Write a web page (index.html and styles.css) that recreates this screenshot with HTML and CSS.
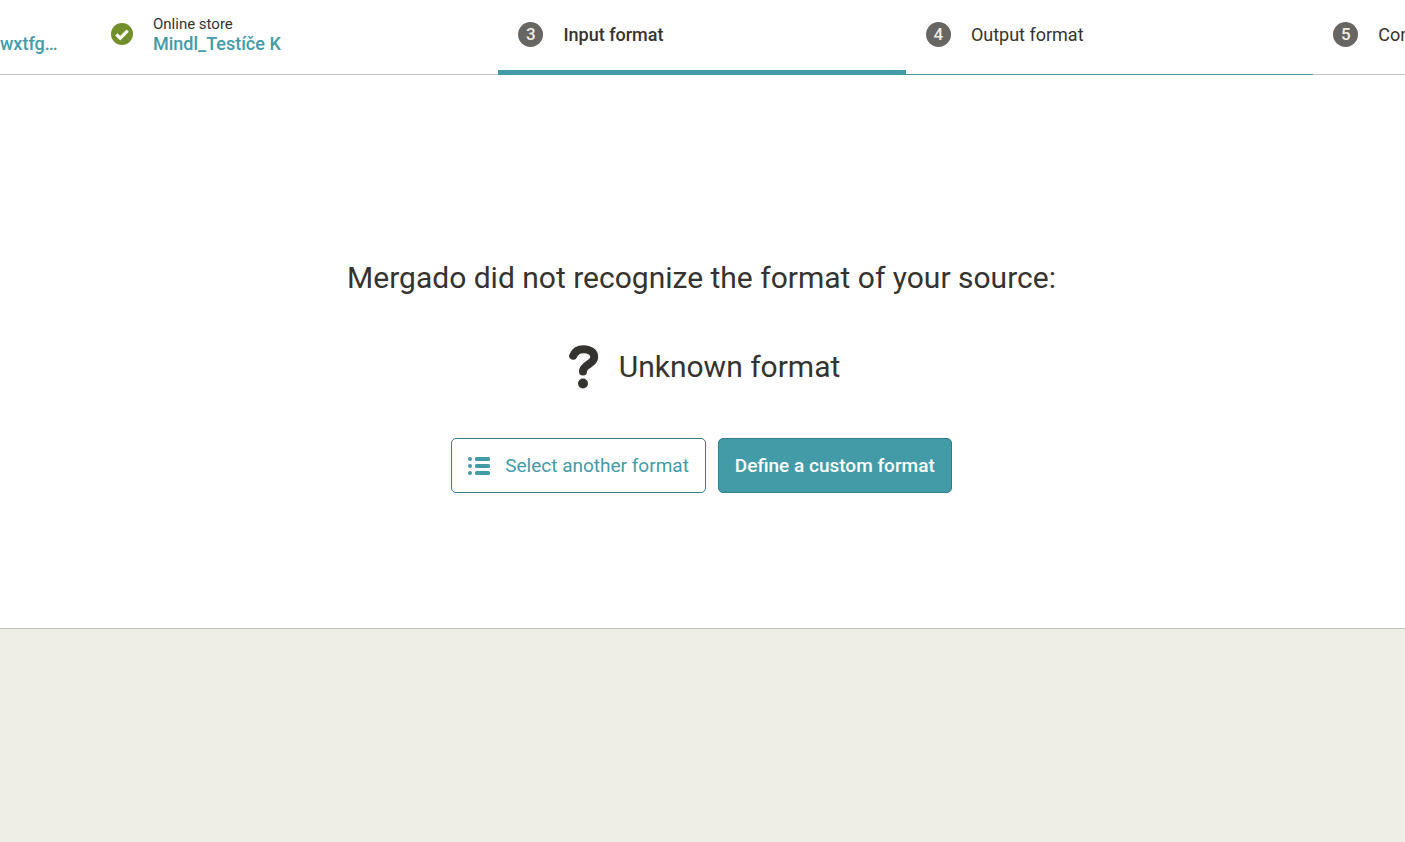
FILE: index.html
```
<!DOCTYPE html>
<html lang="en">
<head>
    <meta charset="UTF-8">
    <meta name="viewport" content="width=device-width, initial-scale=1.0">
    <title>Input format</title>
    <link rel="stylesheet" href="styles.css">
</head>
<body>

    <!-- Wizard steps -->
    <nav class="steps">
        <div class="step step-first">
            <a href="#" class="step-value">wxtfg…</a>
        </div>
        <div class="step">
            <svg class="step-done" viewBox="0 0 24 24" aria-hidden="true">
                <circle cx="12" cy="12" r="12" fill="#738f2b"/>
                <path d="M5.8 12.4l4.2 4.2 8.2-8.2" fill="none" stroke="#fff" stroke-width="3.4"/>
            </svg>
            <div class="step-text">
                <span class="step-label">Online store</span>
                <a href="#" class="step-value">Mindl_Testíče K</a>
            </div>
        </div>
        <div class="step active">
            <span class="step-number">3</span>
            <span class="step-name">Input format</span>
        </div>
        <div class="step next">
            <span class="step-number">4</span>
            <span class="step-name">Output format</span>
        </div>
        <div class="step">
            <span class="step-number">5</span>
            <span class="step-name">Confirmation</span>
        </div>
    </nav>

    <main class="content">
        <h1 class="title">Mergado did not recognize the format of your source:</h1>

        <div class="format">
            <svg class="format-icon" viewBox="0 0 30 44" aria-hidden="true">
                <path d="M4.2 10.7C6 6.2 9.6 4.2 14.4 4.2c6.4 0 10.8 3.1 10.8 7.9 0 7.3-11.2 7.2-11.2 14.3" fill="none" stroke="#35332f" stroke-width="8" stroke-linecap="round" stroke-linejoin="round"/>
                <circle cx="14" cy="38.5" r="5" fill="#35332f"/>
            </svg>
            <span>Unknown format</span>
        </div>

        <div class="buttons">
            <button type="button" class="btn">
                <svg class="btn-icon" viewBox="0 0 22 18" fill="currentColor" aria-hidden="true">
                    <circle cx="2" cy="2" r="2"/>
                    <circle cx="2" cy="9" r="2"/>
                    <circle cx="2" cy="16" r="2"/>
                    <rect x="7" y="0" width="15" height="4" rx="1.5"/>
                    <rect x="7" y="7" width="15" height="4" rx="1.5"/>
                    <rect x="7" y="14" width="15" height="4" rx="1.5"/>
                </svg>
                Select another format
            </button>
            <button type="button" class="btn btn-primary">Define a custom format</button>
        </div>
    </main>

</body>
</html>
```
FILE: styles.css
```
* {
    box-sizing: border-box;
}

body {
    margin: 0;
    font-family: Roboto, "Liberation Sans", sans-serif;
    font-size: 18px;
    color: #35332f;
    background-color: #eeeee6;
}

/* Wizard steps */
.steps {
    display: grid;
    grid-template-columns: 91px repeat(3, 29%) 1fr;
    background-color: #fff;
    overflow: hidden;
}

.step {
    display: flex;
    align-items: center;
    gap: 20px;
    height: 75px;
    padding: 0 20px 6px;
    border-bottom: 1px solid #c4c4c2;
    white-space: nowrap;
    overflow: hidden;
}

.step-first {
    align-items: flex-end;
    padding: 0 0 20px;
}

.step.active {
    padding-bottom: 2px;
    border-bottom: 5px solid #439ba8;
    font-weight: 500;
}

.step.next {
    border-bottom-color: #439ba8;
}

.step-done {
    width: 22px;
    height: 22px;
}

.step-text {
    display: flex;
    flex-direction: column;
}

.step-label {
    font-size: 15px;
    line-height: 20px;
}

.step-value {
    line-height: 20px;
    font-weight: 500;
    color: #439ba8;
    text-decoration: none;
}

.step-number {
    flex: none;
    width: 25px;
    height: 25px;
    border-radius: 50%;
    background-color: #686663;
    color: #eeeee6;
    font-size: 17px;
    font-weight: 500;
    line-height: 25px;
    text-align: center;
}

/* Content */
.content {
    display: flex;
    flex-direction: column;
    align-items: center;
    padding: 180px 22px 135px 20px;
    background-color: #fff;
    border-bottom: 1px solid #c4c4c2;
}

.title {
    margin: 0;
    font-size: 30px;
    font-weight: 400;
    line-height: 45px;
}

.format {
    display: flex;
    align-items: center;
    gap: 20px;
    margin: 44px 0 49px;
    padding-left: 6px;
    font-size: 30px;
    line-height: 45px;
}

.format-icon {
    width: 30px;
    height: 44px;
}

.buttons {
    display: flex;
    gap: 12px;
}

.btn {
    display: flex;
    align-items: center;
    gap: 15px;
    height: 55px;
    padding: 0 16px;
    border: 1px solid #2f7f88;
    border-radius: 5px;
    background-color: #fff;
    color: #439ba8;
    font-family: inherit;
    font-size: 19px;
    cursor: pointer;
}

.btn-primary {
    background-color: #439ba8;
    color: #fff;
    font-weight: 500;
}

.btn-icon {
    width: 22px;
    height: 18px;
}
```
